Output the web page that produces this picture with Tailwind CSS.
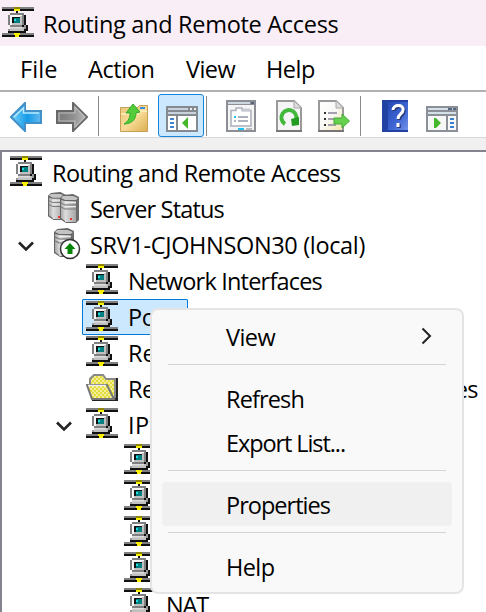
<!DOCTYPE html>
<html lang="en">
<head>
<meta charset="utf-8">
<title>Routing and Remote Access</title>
<script src="https://cdn.jsdelivr.net/npm/@tailwindcss/browser@4"></script>
</head>
<body class="bg-white">
<svg class="absolute w-0 h-0">
  <linearGradient id="blue"><stop stop-color="#79d3fa"/><stop offset=".55" stop-color="#159be8"/><stop offset="1" stop-color="#65b9ef"/></linearGradient>
  <linearGradient id="gray"><stop stop-color="#777"/><stop offset=".5" stop-color="#8d8d8d"/><stop offset="1" stop-color="#bbb"/></linearGradient>
  <linearGradient id="gold" x2="1" y2="1"><stop stop-color="#e8c67c"/><stop offset=".5" stop-color="#f8dc98"/><stop offset="1" stop-color="#dcae4e"/></linearGradient>
  <linearGradient id="book" x2="1" y2="1"><stop stop-color="#2349b5"/><stop offset=".6" stop-color="#4068d4"/><stop offset="1" stop-color="#7592e8"/></linearGradient>
  <linearGradient id="paper" x2="1" y2="1"><stop stop-color="#fff"/><stop offset=".5" stop-color="#f8f8f5"/><stop offset="1" stop-color="#f5e6aa"/></linearGradient>
  <linearGradient id="metal"><stop stop-color="#aaa"/><stop offset=".3" stop-color="#ddd"/><stop offset="1" stop-color="#a5a5a5"/></linearGradient>
  <pattern id="dots" width="4" height="4" patternUnits="userSpaceOnUse"><path fill="#f3ef98" d="M0 0h4v4H0z"/><path fill="#e4dc3c" d="M0 0h2v2H0zM2 2h2v2H2z"/></pattern>
  <symbol id="net" viewBox="0 0 32 30">
    <path fill="#808080" d="M0 0h32v2H0zM0 26h32v2H0z"/>
    <path fill="#111" d="M0 2h32v2H0zM0 28h32v2H0zM14 4h2v3h-2z"/>
    <path fill="#8c8600" d="M12 0h6v2h-6z"/><path fill="#f8f000" d="M12 2h6v2h-6zM12 26h6v2h-6zM13 28h4v2h-4z"/>
    <path fill="#111" d="M22 8h2v10h2v6h-2v2H6v-2h16v-4h-6v-2h6z"/>
    <path fill="#808080" d="M8 6h14v12h-2v2H8v-2H6V8h2z"/>
    <path fill="#f6f6f6" d="M8 8h12v2H10v8H8z"/><path fill="#c0c0c0" d="M10 16h10v2H10zM18 9h2v8h-2zM8 20h14v4H8z"/>
    <path fill="#999" d="M22 18h2v4h-2zM6 22h2v2H6z"/><path fill="#ddd" d="M8 20h12v1.500H8z"/>
    <path fill="#111" d="M10 10h8v6h-8z"/><path fill="#008080" d="M12 11h6v5h-6z"/><path fill="#20dce0" d="M12 12h2v2h-2z"/>
  </symbol>
  <symbol id="tower" viewBox="0 0 20 30" preserveAspectRatio="none">
    <path fill="#666" d="M3 1 13 0l6 3v23l-3 3H6l-6-4V4z"/><path fill="#c4c4c4" d="M3 2h10l5 2-2 2H5L1 4z"/>
    <path fill="url(#metal)" d="M1 6l4 1v20l-4-3zM5 7h11v21H5z"/><path fill="#6c6c6c" d="M16 7l3-3v21l-3 3z"/>
    <path fill="none" stroke="#777" d="M1 9l4 2h11M1 13l4 2h11"/><path fill="none" stroke="#eee" d="M5 8.500h11M5 12.500h11"/>
  </symbol>
</svg>

<div id="app" class="relative w-[486px] h-[612px] overflow-hidden flex flex-col bg-white text-black text-[23.5px] leading-[36px] whitespace-nowrap font-['Open_Sans','Noto_Sans',sans-serif]">
  <header class="h-[46px] shrink-0 bg-[#f9eef6] flex items-start pl-[2px] pt-[6px]">
    <svg class="w-8 h-[30px] mt-[1px] mr-[9px]"><use href="#net"/></svg><span data-w="295.500">Routing and Remote Access</span>
  </header>
  <nav class="h-[44px] shrink-0 flex pl-5 pt-[5px]">
    <span class="w-[68px]"><span data-w="37.500">File</span></span><span class="w-[98px]"><span data-w="66.500">Action</span></span><span class="w-[80px]"><span data-w="49">View</span></span><span><span data-w="49">Help</span></span>
  </nav>

  <div class="h-[48px] shrink-0 border-t-2 border-t-[#b0b0b0] border-b border-b-[#d9d9d9] flex items-start pl-[10px]">
    <svg class="w-8 h-[30px] mt-[10px]" viewBox="0 0 32 30"><path d="M1 15 15 1v8h16v12H15v8z" fill="url(#blue)" stroke="#438fc8" stroke-width="2"/><path d="M4 15 13.500 6v5H29" fill="none" stroke="#b6ebff" stroke-width="1.500"/></svg>
    <svg class="w-8 h-[30px] mt-[10px] ml-[14px]" viewBox="0 0 32 30"><path d="M31 15 17 1v8H1v12h16v8z" fill="url(#gray)" stroke="#686868" stroke-width="2"/><path d="M3 19v-8h16V5l10 10-10 10v-6z" fill="none" stroke="#bbb" stroke-width="1.200"/></svg>
    <div class="w-px h-10 bg-[#8b8b8b] mt-1 ml-[10px]"></div>
    <svg class="w-7 h-[30px] mt-[10px] ml-[21px]" viewBox="0 0 28 30"><path d="M.5 5.500h17l2-2h8v26H.5z" fill="url(#gold)" stroke="#c6a056"/><path d="M1 12h17l3-3h6" fill="none" stroke="#fff0bd" stroke-width="1.500"/><path d="M20 6h5" stroke="#3c8de0" stroke-width="2"/><path d="M4 22c5-3 6-7 6-11H6l7-9 7 8-4 1c0 7-5 11-12 11z" fill="#52cc3a" stroke="#35a928"/></svg>
    <div class="w-[46px] h-[43px] ml-[10px] mt-[2px] rounded-[3px] border border-[#1685dc] bg-[#cce8ff] pl-[7px] pt-[11px]">
      <svg class="block w-8 h-[26px]" viewBox="0 0 32 26"><path fill="#858990" d="M0 0h32v26H0z"/><path fill="#c9d3dd" d="M2 2h20v2H2zM2 6h28v2H2z"/><path fill="#eee" d="M24 2h2v2h-2zM28 2h2v2h-2z"/><path fill="#fff" d="M2 10h8v14H2zM12 10h18v14H12z"/><path stroke="#4283d0" stroke-width="2" d="M4 13h4M4 17h4M4 21h4"/><path fill="#45b72c" d="M22 11v12l-6-6z"/></svg>
    </div>
    <div class="w-px h-10 bg-[#8b8b8b] mt-1 ml-[2px]"></div>
    <svg class="w-[30px] h-8 mt-2 ml-[19px]" viewBox="0 0 30 32"><path fill="#8b8f95" d="M0 0h30v32H0z"/><path fill="#ccd6df" d="M2 2h22v2H2z"/><path fill="#5c6678" d="M25 2h3v2h-3z"/><path fill="#f5f5f5" d="M2 5h26v25H2z"/><path fill="#fff" stroke="#a8aeba" stroke-width="1.500" d="M5 10.500h5V8h6v2.500h9V26H5z"/><path d="M16 8.500h8v3h-8z" fill="#c4c8d1"/><path fill="#20bff5" d="M8 16h2v2H8zM12 28h6v2h-6z"/><path stroke="#9299a8" stroke-width="1.500" d="M12 17h10M8 21h2M12 21h10"/><path fill="#bbb" d="M20 28h6v2h-6z"/></svg>
    <svg class="w-[26px] h-8 mt-2 ml-[20px]" viewBox="0 0 26 32"><path fill="#f5f5f7" stroke="#999" stroke-width="2" d="M1 1h17l7 7v23H1z"/><path d="M18 1v7h7" fill="#ddd" stroke="#aaa"/><path fill="#777" d="M0 30h26v2H0z"/><path d="M9 24a7.500 7.500 0 1 1 10-2" fill="none" stroke="#42b83c" stroke-width="4"/><path fill="#229c22" d="M15 19l8-2v8l-7 1z"/></svg>
    <svg class="w-8 h-8 mt-2 ml-[16px]" viewBox="0 0 32 32"><path fill="url(#paper)" stroke="#999" stroke-width="2" d="M1 1h17l7 7v23H1z"/><path d="M18 1v7h7" fill="#ddd" stroke="#aaa"/><path fill="#777" d="M0 30h26v2H0z"/><path stroke="#333" stroke-width="2" d="M6 13h2M6 19h2M6 25h2"/><path stroke="#8b8499" stroke-width="1.600" d="M10 13h9M10 19h8M10 25h8"/><path fill="#65d14e" stroke="#41a936" d="M16 18h8v-4l7.500 7-7.500 7v-4h-8z"/></svg>
    <div class="w-px h-10 bg-[#8b8b8b] mt-1 ml-[10px]"></div>
    <svg class="w-[26px] h-8 mt-2 ml-[21px]" viewBox="0 0 26 32"><path fill="#2142a2" d="M0 0h26v32H0z"/><path fill="url(#book)" d="M6 2h20v28H6z"/><path d="M11 10c0-6 11-6 10 0 0 4-5 4-5 9M16 23v4" fill="none" stroke="#263978" stroke-width="3.500" transform="translate(1 1)"/><path d="M11 10c0-6 11-6 10 0 0 4-5 4-5 9M16 23v4" fill="none" stroke="#fff" stroke-width="3"/></svg>
    <svg class="w-8 h-[26px] mt-[14px] ml-[18px]" viewBox="0 0 32 26"><path fill="#8b9098" d="M0 0h32v26H0z"/><path fill="#d5e0e7" d="M2 2h20v2H2zM2 6h28v2H2z"/><path fill="#56667d" d="M22 2h8v2h-8z"/><path fill="#c9d3dd" d="M26 2h1v2h-1z"/><path fill="#f7f7f7" d="M2 10h18v14H2zM22 10h8v14h-8z"/><path stroke="#3580ce" stroke-width="2" d="M24 13h4M24 17h4M24 21h4"/><path fill="#45b72c" d="M8 12v10h2l5-5-5-5z"/></svg>
  </div>
  <div class="h-[12px] shrink-0 bg-[#f0f0f0]"></div>

  <main class="flex-1 min-h-0 overflow-hidden border-t-2 border-l-2 border-[#83848e] pt-[3px]">
    <div class="h-9 flex pl-2"><svg class="w-8 h-[30px] mt-px mr-[10px]"><use href="#net"/></svg><span data-w="288.500">Routing and Remote Access</span></div>
    <div class="h-9 flex pl-[46px]"><svg class="w-8 h-8 mt-px mr-[10px]" viewBox="0 0 32 32"><use href="#tower" x="0" y="0" width="19" height="29"/><use href="#tower" x="12" y="2" width="20" height="30"/><path fill="#ef3434" d="M10 24h2v2h-2zM22 26h2v2h-2z"/></svg><span data-w="134">Server Status</span></div>
    <div class="h-9 flex pl-4"><svg class="w-4 h-4 mt-[12px] mr-[20px]" viewBox="0 0 16 16"><path d="m1 3.500 7 7 7-7" fill="none" stroke="#222" stroke-width="2.600"/></svg><svg class="w-8 h-8 mt-px mr-1" viewBox="0 0 32 32"><use href="#tower" x="0" y="0" width="21" height="30"/><circle cx="16" cy="21" r="9.500" fill="#fff" stroke="#333" stroke-width="1.500"/><path fill="#078407" d="m16 15 5.500 6H18.500v5h-5v-5h-3z"/></svg><span data-w="275">SRV1-CJOHNSON30 (local)</span></div>
    <div class="h-9 flex pl-[84px]"><svg class="w-8 h-[30px] mt-px mr-[10px]"><use href="#net"/></svg><span data-w="194">Network Interfaces</span></div>
    <div class="h-9 flex"><div class="ml-[80px] w-[106px] h-9 bg-[#cce8ff] border border-[#0078d7] pl-[3px] flex leading-[34px] rounded-[1px]"><svg class="w-8 h-[30px] mt-px mr-[10px]"><use href="#net"/></svg><span data-w="55">Ports</span></div></div>
    <div class="h-9 flex pl-[84px]"><svg class="w-8 h-[30px] mt-px mr-[10px]"><use href="#net"/></svg><span data-w="244">Remote Access Clients</span></div>
    <div class="h-9 flex pl-[84px]"><svg class="w-8 h-7 mt-[3px] mr-[10px]" viewBox="0 0 32 28"><path fill="#222" d="M28 4h4v23H6v-3h20z"/><path fill="url(#dots)" stroke="#888" stroke-width="2" d="M4 11V5l4-4h9l3 4h9v18H7z"/><path fill="url(#dots)" stroke="#777" stroke-width="2" d="M1 11h20l7 14H6z"/><path d="M2 11.500h18" stroke="#eee" stroke-width="1.500"/></svg><span data-w="350">Remote Access Logging &amp; Policies</span></div>
    <div class="h-9 flex pl-[54px]"><svg class="w-4 h-4 mt-[12px] mr-[14px]" viewBox="0 0 16 16"><path d="m1 3.500 7 7 7-7" fill="none" stroke="#222" stroke-width="2.600"/></svg><svg class="w-8 h-[30px] mt-px mr-[10px]"><use href="#net"/></svg><span data-w="48">IPv4</span></div>
    <div class="h-9 flex pl-[122px]"><svg class="w-8 h-[30px] mt-px mr-[10px]"><use href="#net"/></svg><span>General</span></div>
    <div class="h-9 flex pl-[122px]"><svg class="w-8 h-[30px] mt-px mr-[10px]"><use href="#net"/></svg><span>Static Routes</span></div>
    <div class="h-9 flex pl-[122px]"><svg class="w-8 h-[30px] mt-px mr-[10px]"><use href="#net"/></svg><span>DHCP Relay Agent</span></div>
    <div class="h-9 flex pl-[122px]"><svg class="w-8 h-[30px] mt-px mr-[10px]"><use href="#net"/></svg><span>IGMP</span></div>
    <div class="h-9 flex pl-[122px]"><svg class="w-8 h-[30px] mt-px mr-[10px]"><use href="#net"/></svg><span data-w="42">NAT</span></div>
  </main>

  <div class="absolute left-[150px] top-[308px] w-[314px] h-[286px] rounded-[8px] border-2 border-[#e4e4e4] bg-[#f9f9f9] pt-[5px] px-[10px] leading-[44px]">
    <div class="h-11 flex items-center justify-between pl-[64px] pr-[20px]"><span data-w="49">View</span><svg class="w-[11px] h-[18px] mb-0.5" viewBox="0 0 11 18"><path d="m1.500 1.500 7.500 7.500-7.500 7.500" fill="none" stroke="#222" stroke-width="2"/></svg></div>
    <div class="h-px bg-[#d5d5d5] mx-[6px] mt-[5px] mb-3"></div>
    <div class="h-11 pl-[64px]"><span data-w="78">Refresh</span></div>
    <div class="h-11 pl-[64px]"><span data-w="119">Export List...</span></div>
    <div class="h-px bg-[#d5d5d5] mx-[6px] mt-[5px] mb-[11px]"></div>
    <div class="h-11 pl-[64px] pt-px rounded-[4px] bg-[#f0f0f0]"><span data-w="104">Properties</span></div>
    <div class="h-px bg-[#d5d5d5] mx-[6px] mt-[6px] mb-3"></div>
    <div class="h-11 pl-[64px]"><span data-w="48.500">Help</span></div>
  </div>
</div>
<script>
  var ctx = document.createElement('canvas').getContext('2d');
  ctx.font = '23.5px "Open Sans"';
  document.querySelectorAll('[data-w]').forEach(function (el) {
    var text = el.textContent;
    el.style.letterSpacing = (parseFloat(el.dataset.w) - ctx.measureText(text).width) / text.length + 'px';
  });
</script>
</body>
</html>
